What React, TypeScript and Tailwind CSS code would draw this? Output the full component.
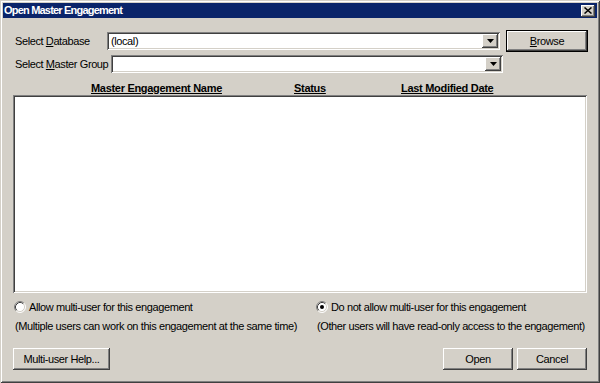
import React from 'react';

// Win2000 style bevels
const raised =
  'shadow-[inset_-1px_-1px_#404040,inset_1px_1px_#ffffff,inset_-2px_-2px_#808080,inset_2px_2px_#d4d0c8]';
const sunken =
  'shadow-[inset_1px_1px_#808080,inset_-1px_-1px_#ffffff,inset_2px_2px_#404040,inset_-2px_-2px_#d4d0c8]';

const Radio = ({ checked }: { checked?: boolean }) => (
  <svg width="12" height="12" viewBox="0 0 12 12" className="shrink-0">
    <circle cx="6" cy="6" r="5" fill="#ffffff" />
    <path d="M2.11 9.89 A5.5 5.5 0 0 1 9.89 2.11" stroke="#808080" fill="none" />
    <path d="M9.89 2.11 A5.5 5.5 0 0 1 2.11 9.89" stroke="#ffffff" fill="none" />
    <path d="M2.82 9.18 A4.5 4.5 0 0 1 9.18 2.82" stroke="#404040" fill="none" />
    <path d="M9.18 2.82 A4.5 4.5 0 0 1 2.82 9.18" stroke="#d4d0c8" fill="none" />
    {checked && <circle cx="6" cy="6" r="2" fill="#000000" />}
  </svg>
);

const ComboBox = ({ width, value }: { width: string; value?: string }) => (
  <div className={`${width} h-[18px] bg-white ${sunken} flex items-center p-[2px]`}>
    <span className="flex-1 pl-[2px] leading-none">{value}</span>
    <div className={`w-[16px] h-[14px] bg-[#d4d0c8] ${raised} flex items-center justify-center`}>
      <svg width="7" height="4" viewBox="0 0 7 4">
        <polygon points="0,0 7,0 3.5,4" fill="#000000" />
      </svg>
    </div>
  </div>
);

const Button = ({ children, width }: { children: React.ReactNode; width: string }) => (
  <button
    type="button"
    className={`${width} h-[22px] bg-[#d4d0c8] ${raised} flex items-center justify-center text-black tracking-[-0.4px]`}
  >
    {children}
  </button>
);

export default function App() {
  return (
    <div
      className="w-[600px] h-[383px] bg-[#d4d0c8] p-[3px] flex flex-col text-[11px] tracking-[-0.4px] whitespace-nowrap text-black shadow-[inset_1px_1px_#d4d0c8,inset_-1px_-1px_#404040,inset_2px_2px_#ffffff,inset_-2px_-2px_#808080]"
      style={{ fontFamily: '"Liberation Sans", Arial, sans-serif' }}
    >
      {/* Title bar */}
      <div className="h-[15px] bg-[#0a246a] flex items-center justify-between pl-[1px] pr-[2px]">
        <span className="text-white font-bold leading-none tracking-[-0.8px]">Open Master Engagement</span>
        <div className={`w-[14px] h-[12px] bg-[#d4d0c8] ${raised} flex items-center justify-center`}>
          <svg width="8" height="7" viewBox="0 0 8 7">
            <path d="M0.5 0.5 L7.5 6.5 M7.5 0.5 L0.5 6.5" stroke="#000000" strokeWidth="1.5" />
          </svg>
        </div>
      </div>

      {/* Database row */}
      <div className="mt-[12px] h-[22px] flex items-center pl-[12px]">
        <span className="w-[92px]">
          Select <span className="underline">D</span>atabase
        </span>
        <ComboBox width="w-[393px]" value="(local)" />
        <div className="ml-[6px] w-[82px] h-[22px] border border-black">
          <button
            type="button"
            className={`w-full h-full bg-[#d4d0c8] ${raised} flex items-center justify-center text-black tracking-[-0.4px]`}
          >
            <span className="underline">B</span>rowse
          </button>
        </div>
      </div>

      {/* Master group row */}
      <div className="mt-[3px] h-[18px] flex items-center pl-[12px]">
        <span className="w-[96px]">
          Select <span className="underline">M</span>aster Group
        </span>
        <ComboBox width="w-[392px]" />
      </div>

      {/* Column headers */}
      <div className="mt-[8px] h-[14px] flex items-center font-bold underline tracking-[-0.3px]">
        <span className="ml-[88px] w-[203px]">Master Engagement Name</span>
        <span className="w-[107px]">Status</span>
        <span>Last Modified Date</span>
      </div>

      {/* List */}
      <div className={`ml-[10px] w-[574px] h-[198px] bg-white ${sunken}`} />

      {/* Multi-user options */}
      <div className="mt-[7px] flex pl-[11px]">
        <div className="w-[302px] flex flex-col">
          <div className="h-[14px] flex items-center gap-[3px]">
            <Radio />
            <span>Allow multi-user for this engagement</span>
          </div>
          <div className="mt-[5px] h-[14px] flex items-center pl-[1px]">
            (Multiple users can work on this engagement at the same time)
          </div>
        </div>
        <div className="flex flex-col">
          <div className="h-[14px] flex items-center gap-[3px]">
            <Radio checked />
            <span>Do not allow multi-user for this engagement</span>
          </div>
          <div className="mt-[5px] h-[14px] flex items-center pl-[1px]">
            (Other users will have read-only access to the engagement)
          </div>
        </div>
      </div>

      {/* Bottom buttons */}
      <div className="mt-[15px] flex items-center pl-[10px] pr-[10px]">
        <Button width="w-[97px]">Multi-user Help...</Button>
        <div className="flex-1" />
        <Button width="w-[70px]">Open</Button>
        <div className="w-[4px]" />
        <Button width="w-[70px]">Cancel</Button>
      </div>
    </div>
  );
}
